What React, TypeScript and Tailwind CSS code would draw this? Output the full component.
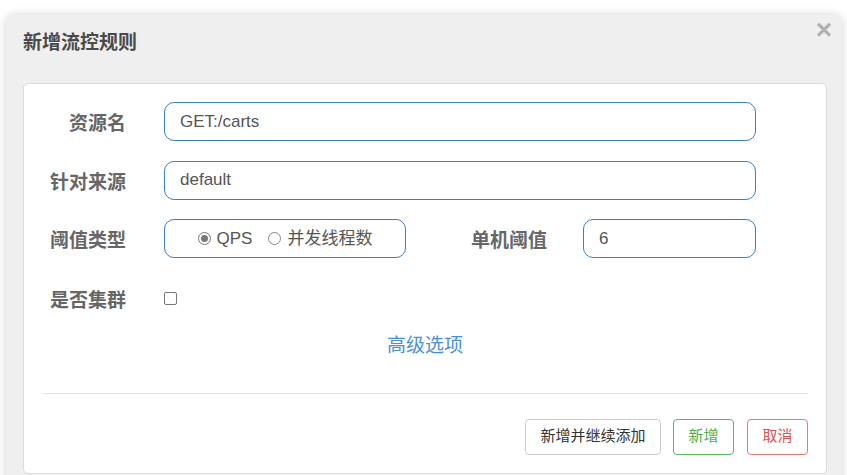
import React from "react";

const font = { fontFamily: '"Liberation Sans", Arial, "Noto Sans CJK SC", sans-serif' };

function Label({ children, w }: { children: React.ReactNode; w: string }) {
  return (
    <div className={`${w} shrink-0 pt-[6px] text-right text-[19px] font-bold text-[#666]`}>{children}</div>
  );
}

export default function App() {
  return (
    <div className="h-[475px] w-[847px] overflow-hidden bg-white" style={font}>
      <div className="ml-[6px] mt-[15px] w-[836px] rounded-[8px] bg-[#efefef] pb-[40px] pl-[17px] pr-[15px] shadow-[0_0_10px_rgba(0,0,0,0.18)]">
        <div className="relative flex h-[56px] items-center">
          <div className="text-[19px] font-bold text-[#4a4a4a]">新增流控规则</div>
          <div className="absolute right-[-5px] top-[1px] text-[28px] font-bold leading-none text-[#b0b0b0]">×</div>
        </div>
        <div className="mt-[12px] rounded-[5px] border border-[#dcdcdc] bg-white px-[18px] pb-[18px] pt-[18px]">
          <div className="flex flex-col gap-[19.5px]">
            <div className="flex items-center">
              <Label w="w-[84px]">资源名</Label>
              <div className="ml-[38px] flex h-[39px] w-[592px] items-center rounded-[10px] border border-[#3d7fbf] px-[15px] text-[17px] text-[#555]">
                GET:/carts
              </div>
            </div>
            <div className="flex items-center">
              <Label w="w-[84px]">针对来源</Label>
              <div className="ml-[38px] flex h-[39px] w-[592px] items-center rounded-[10px] border border-[#3d7fbf] px-[15px] text-[17px] text-[#555]">
                default
              </div>
            </div>
            <div className="flex items-center">
              <Label w="w-[84px]">阈值类型</Label>
              <div className="ml-[38px] flex h-[39px] w-[242px] items-center justify-center rounded-[10px] border border-[#3d7fbf] text-[17px] text-[#555]">
                <span className="flex h-[13px] w-[13px] items-center justify-center rounded-full border border-[#777]">
                  <span className="h-[7px] w-[7px] rounded-full bg-[#777]" />
                </span>
                <span className="ml-[6px]">QPS</span>
                <span className="ml-[16px] h-[13px] w-[13px] rounded-full border border-[#888]" />
                <span className="ml-[6px]">并发线程数</span>
              </div>
              <Label w="w-[141px]">单机阈值</Label>
              <div className="ml-[36px] flex h-[39px] w-[173px] items-center rounded-[10px] border border-[#3d7fbf] px-[15px] text-[17px] text-[#555]">
                6
              </div>
            </div>
          </div>
          <div className="mt-[19.5px] flex h-[42px] items-center">
            <Label w="w-[84px]">是否集群</Label>
            <span className="ml-[38px] h-[13px] w-[13px] rounded-[2px] border border-[#777]" />
          </div>
          <div className="mt-[15px] flex h-[24px] items-center justify-center text-[19px] text-[#4a8fd4]">
            高级选项
          </div>
          <div className="mt-[34px] h-px bg-[#e3e3e3]" />
          <div className="mt-[25px] flex justify-end gap-[12px]">
            <div className="flex h-[36px] w-[136px] items-center justify-center rounded-[4px] border border-[#ccc] text-[15px] text-[#333]">
              新增并继续添加
            </div>
            <div className="flex h-[36px] w-[61px] items-center justify-center rounded-[4px] border border-[#5cb85c] text-[15px] text-[#4cae4c]">
              新增
            </div>
            <div className="ml-px flex h-[36px] w-[61px] items-center justify-center rounded-[4px] border border-[#e07a78] text-[15px] text-[#d9534f]">
              取消
            </div>
          </div>
        </div>
      </div>
    </div>
  );
}
